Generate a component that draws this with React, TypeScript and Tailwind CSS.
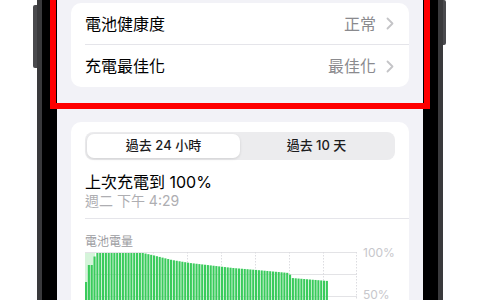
import React from "react";

// top of each bar, in px below the 100% line, keyed by x inside the chart
const profile: [number, number][] = [
  [0, 30],
  [2, 30],
  [3, 13],
  [7, 13],
  [8, 5],
  [11, 4],
  [12, 1],
  [58, 1],
  [67, 3],
  [75, 5],
  [87, 8],
  [105, 11],
  [148, 16],
  [172, 18],
  [204, 21],
  [207, 26],
  [243, 29],
];

function topAt(x: number) {
  for (let i = 1; i < profile.length; i++) {
    const [x0, y0] = profile[i - 1];
    const [x1, y1] = profile[i];
    if (x <= x1) return y0 + ((y1 - y0) * (x - x0)) / (x1 - x0 || 1);
  }
  return profile[profile.length - 1][1];
}

const step = 272 / 96;
const bars = Array.from({ length: 86 }, (_, i) => ({ x: i * step, top: topAt(i * step + 1) }));

function Chevron() {
  return (
    <svg width="8" height="13" viewBox="0 0 8 13" fill="none">
      <path d="M1.5 1.5 L6.5 6.5 L1.5 11.5" stroke="#c4c4c7" strokeWidth="1.8" strokeLinecap="round" strokeLinejoin="round" />
    </svg>
  );
}

function Row({ label, value }: { label: string; value: string }) {
  return (
    <div className="flex h-full items-center justify-between pl-[14px] pr-[15px]">
      <span className="text-[16px] text-black">{label}</span>
      <div className="flex items-center gap-[10px]">
        <span className="text-[16px] text-[#8a8a8e]">{value}</span>
        <Chevron />
      </div>
    </div>
  );
}

function BatteryChart() {
  return (
    <svg width="272" height="60" viewBox="0 0 272 60" className="block">
      <rect x="0" y="0" width="10" height="60" fill="#d5f4da" />
      {[0, 22, 44].map((y) => (
        <line key={y} x1="0" x2="272" y1={y + 0.5} y2={y + 0.5} stroke="#e3e3e6" strokeWidth="1" />
      ))}
      {[34, 68, 102, 136, 170, 204, 238, 271].map((x) => (
        <line key={x} x1={x + 0.5} x2={x + 0.5} y1="0" y2="60" stroke="#dcdce0" strokeWidth="1" strokeDasharray="1.5 1.5" />
      ))}
      {bars.map((b, i) => (
        <rect key={i} x={b.x} y={b.top} width={2.1} height={60 - b.top} fill="#3acb5c" />
      ))}
    </svg>
  );
}

export default function App() {
  return (
    <div className="relative h-[300px] w-[480px] overflow-hidden bg-white font-['Inter','Noto_Sans_CJK_TC',sans-serif]">
      <div className="flex justify-center">
        <div className="relative h-[340px] w-[406px] bg-[#3a3a3c] px-[5px]">
          <div className="absolute left-[-4px] top-[5px] h-[63px] w-[4px] rounded-l-[2px] bg-[#4a4a4d]" />
          <div className="absolute right-[-3px] top-0 h-[45px] w-[3px] rounded-r-[2px] bg-[#4a4a4d]" />
          <div className="h-full bg-black px-[15px]">
            <div className="h-full bg-[#f2f2f7] px-[14px] pt-[3px]">
              <div className="overflow-hidden rounded-[10px] bg-white">
                <div className="h-[41px]">
                  <Row label="電池健康度" value="正常" />
                </div>
                <div className="ml-[14px] h-px bg-[#e5e5ea]" />
                <div className="h-[42px]">
                  <Row label="充電最佳化" value="最佳化" />
                </div>
              </div>

              <div className="mt-[35px] h-[300px] rounded-[10px] bg-white pt-[10px]">
                <div className="mx-[14px] flex h-[28px] rounded-[8px] bg-[#ececee] p-[2px]">
                  <div className="flex flex-1 items-center justify-center rounded-[7px] bg-white text-[13px] font-medium text-[#1c1c1e] shadow-[0_1px_3px_rgba(0,0,0,0.12)]">
                    過去 24 小時
                  </div>
                  <div className="flex flex-1 items-center justify-center text-[13px] font-medium text-[#1c1c1e]">
                    過去 10 天
                  </div>
                </div>

                <div className="mt-[12px] px-[14px]">
                  <div className="text-[16px] leading-[20px] text-black">上次充電到 100%</div>
                  <div className="text-[14px] leading-[18px] text-[#aeaeb2]">週二 下午 4:29</div>
                </div>

                <div className="ml-[14px] mt-[8px] h-px bg-[#e5e5ea]" />

                <div className="mt-[15px] px-[14px]">
                  <div className="text-[12px] leading-[16px] text-[#9c9ca1]">電池電量</div>
                  <div className="mt-[-4px] flex gap-[6px]">
                    <div className="mt-[6px]">
                      <BatteryChart />
                    </div>
                    <div className="flex flex-col text-[12px] leading-[14px] text-[#c7c7cc]">
                      <span>100%</span>
                      <span className="mt-[28px]">50%</span>
                    </div>
                  </div>
                </div>
              </div>
            </div>
          </div>
        </div>
      </div>

      <div className="absolute left-[50px] top-[-10px] h-[119px] w-[380px] border-[6px] border-[#f00]" />
    </div>
  );
}
